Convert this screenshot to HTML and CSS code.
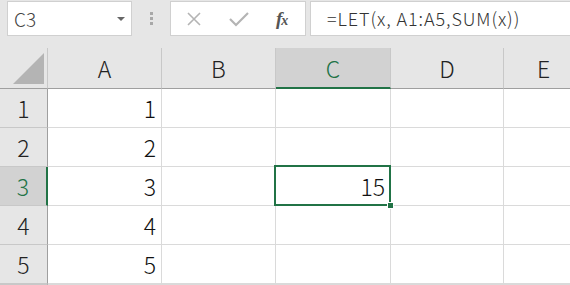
FILE: index.html
```html
<!DOCTYPE html>
<html lang="ja">
  <head>
    <meta charset="UTF-8" />
    <title>LET</title>
    <link rel="stylesheet" href="styles.css">
  </head>
  <body>
    <div class="formulaBar">
      <div class="nameBox">
        <span class="nameText">C3</span>
        <svg class="dropArrow" width="8" height="5" viewBox="0 0 8 5"><path d="M0 0h8L4 4z" fill="#666"/></svg>
      </div>
      <div class="grip"><i></i><i></i><i></i></div>
      <div class="fxButtons">
        <svg width="16" height="16" viewBox="0 0 16 16"><path d="M2 2l12 12M14 2L2 14" stroke="#b4b4b4" stroke-width="1.6" fill="none"/></svg>
        <svg width="20" height="16" viewBox="0 0 20 16"><path d="M1 8l6 6L19 2" stroke="#b4b4b4" stroke-width="2.2" fill="none"/></svg>
        <span class="fx">f<small>x</small></span>
      </div>
      <div class="formulaInput">=LET(x, A1:A5,SUM(x))</div>
    </div>
    <div class="sheet">
      <div class="corner"><span class="cornerTri"></span></div>
      <div class="colHead">A</div>
      <div class="colHead">B</div>
      <div class="colHead active">C</div>
      <div class="colHead">D</div>
      <div class="colHead">E</div>

      <div class="rowHead">1</div>
      <div class="cell num">1</div><div class="cell"></div><div class="cell"></div><div class="cell"></div><div class="cell"></div>
      <div class="rowHead">2</div>
      <div class="cell num">2</div><div class="cell"></div><div class="cell"></div><div class="cell"></div><div class="cell"></div>
      <div class="rowHead active">3</div>
      <div class="cell num">3</div><div class="cell"></div><div class="cell num selected">15<span class="handle"></span></div><div class="cell"></div><div class="cell"></div>
      <div class="rowHead">4</div>
      <div class="cell num">4</div><div class="cell"></div><div class="cell"></div><div class="cell"></div><div class="cell"></div>
      <div class="rowHead">5</div>
      <div class="cell num">5</div><div class="cell"></div><div class="cell"></div><div class="cell"></div><div class="cell"></div>
      <div class="rowHead"></div>
      <div class="cell"></div><div class="cell"></div><div class="cell"></div><div class="cell"></div><div class="cell"></div>
    </div>
  </body>
</html>
```

FILE: styles.css
```css
html {
  height: 100%;
}
body {
  margin: 0;
  height: 285px;
  overflow: hidden;
  background-color: #e6e6e6;
  font-family: "Noto Sans CJK JP", "Noto Sans", sans-serif;
  font-weight: 300;
  color: #222;
}
.formulaBar {
  display: flex;
  height: 48px;
  padding-top: 1px;
  box-sizing: border-box;
}
.nameBox {
  display: flex;
  align-items: center;
  justify-content: space-between;
  box-sizing: border-box;
  width: 125px;
  height: 35px;
  margin-left: 7px;
  padding: 0 6px 0 6px;
  background-color: white;
  border: 1px solid #d0d0d0;
}
.nameText {
  font-size: 19px;
  color: #444;
}
.dropArrow {
  margin-top: 2px;
}
.grip {
  display: flex;
  flex-direction: column;
  align-items: center;
  justify-content: center;
  gap: 2px;
  width: 38px;
  height: 35px;
}
.grip i {
  width: 3px;
  height: 3px;
  background-color: #a8a8a8;
}
.fxButtons {
  display: flex;
  align-items: center;
  box-sizing: border-box;
  width: 136px;
  height: 35px;
  padding-left: 15px;
  gap: 27px;
  background-color: white;
  border: 1px solid #d0d0d0;
}
.fx {
  font-family: "Liberation Serif", serif;
  font-style: italic;
  font-weight: bold;
  font-size: 19px;
  color: #555;
  letter-spacing: -1px;
}
.fx small {
  font-size: 14px;
}
.formulaInput {
  flex: 1;
  box-sizing: border-box;
  height: 35px;
  margin-left: 4px;
  padding-left: 16px;
  line-height: 33px;
  font-size: 18px;
  letter-spacing: 0.9px;
  color: #333;
  background-color: white;
  border: 1px solid #d0d0d0;
  border-right: 0;
}
.sheet {
  display: grid;
  grid-template-columns: 48px 114px 114px 115px 113px 80px;
  grid-template-rows: 41px 39px 39px 39px 39px 39px 1fr;
  height: 237px;
  background-color: white;
}
.corner {
  display: flex;
  align-items: flex-end;
  justify-content: flex-end;
  box-sizing: border-box;
  padding: 0 3px 4px 0;
  background-color: #e6e6e6;
  border-right: 1px solid #c8c8c8;
  border-bottom: 1px solid #9f9f9f;
}
.cornerTri {
  width: 31px;
  height: 31px;
  background-color: #b4b4b4;
  clip-path: polygon(100% 0, 100% 100%, 0 100%);
}
.colHead {
  display: flex;
  align-items: center;
  justify-content: center;
  box-sizing: border-box;
  font-size: 23px;
  background-color: #e6e6e6;
  border-right: 1px solid #c8c8c8;
  border-bottom: 1px solid #9f9f9f;
}
.colHead.active {
  color: #217346;
  background-color: #d2d2d2;
  border-bottom: 2px solid #217346;
}
.rowHead {
  display: flex;
  align-items: center;
  justify-content: center;
  box-sizing: border-box;
  font-size: 23px;
  background-color: #e6e6e6;
  border-right: 1px solid #9f9f9f;
  border-bottom: 1px solid #c8c8c8;
}
.rowHead.active {
  color: #217346;
  background-color: #d2d2d2;
  border-right: 2px solid #217346;
}
.cell {
  box-sizing: border-box;
  border-right: 1px solid #dadada;
  border-bottom: 1px solid #dadada;
}
.num {
  display: flex;
  align-items: center;
  justify-content: flex-end;
  padding-right: 5px;
  font-size: 23px;
  color: #111;
}
.selected {
  position: relative;
}
.selected::after {
  content: "";
  position: absolute;
  top: -2px;
  left: -2px;
  right: -1px;
  bottom: -1px;
  border: 2px solid #217346;
}
.handle {
  position: absolute;
  right: -4px;
  bottom: -4px;
  z-index: 1;
  width: 5px;
  height: 5px;
  background-color: #217346;
  border: 1px solid white;
}
```
